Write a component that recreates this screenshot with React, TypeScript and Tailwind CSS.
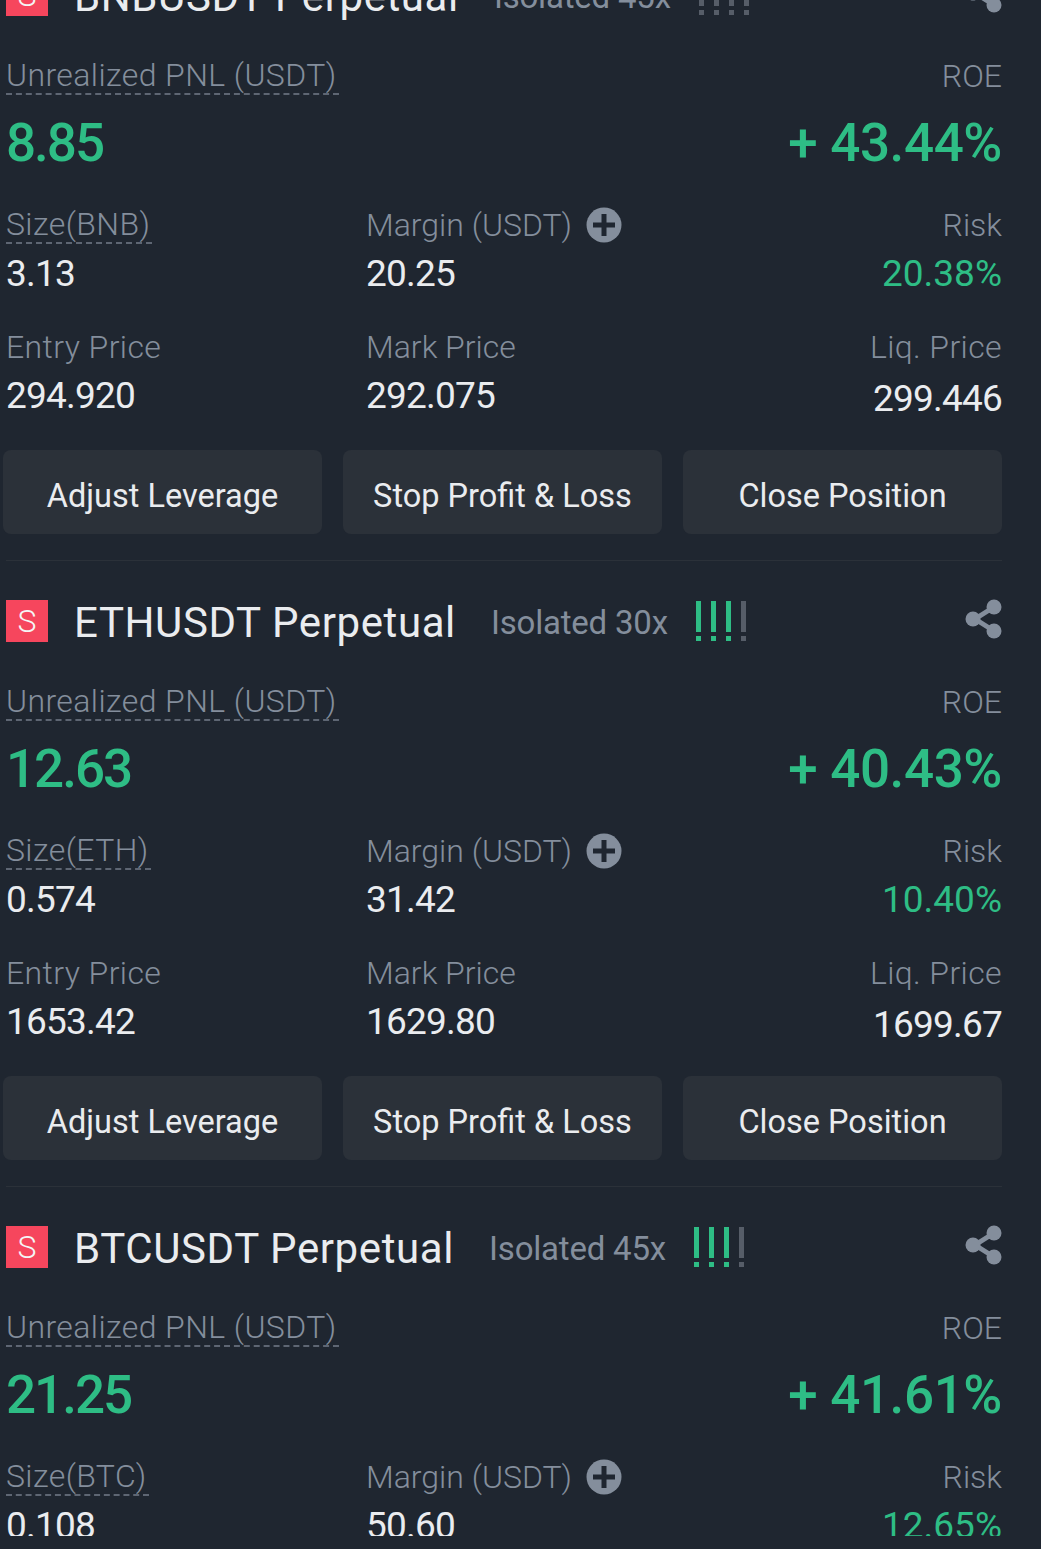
const F = "font-['Roboto','Liberation_Sans',sans-serif]";

function Share() {
  return (
    <svg width="38" height="40" viewBox="0 0 38 40" className="text-[#848e9c] mb-[4px]">
      <path d="M10 20 L29 8 M10 20 L29 32" stroke="currentColor" strokeWidth="5" />
      <circle cx="29" cy="8" r="7.5" fill="currentColor" />
      <circle cx="8" cy="20" r="7.5" fill="currentColor" />
      <circle cx="29" cy="32" r="7.5" fill="currentColor" />
    </svg>
  );
}

function Plus() {
  return (
    <svg width="36" height="36" viewBox="0 0 36 36" className="text-[#848e9c]">
      <circle cx="18" cy="18" r="17.5" fill="currentColor" />
      <path d="M18 7v22M7 18h22" stroke="#1f2630" strokeWidth="5" />
    </svg>
  );
}

function Bars({ active }: { active: number }) {
  return (
    <div className="ml-[28px] flex gap-[10px]">
      {[0, 1, 2, 3].map((i) => (
        <div key={i} className="flex flex-col gap-[4px] w-[5px]">
          <div className={`h-[31px] ${i < active ? "bg-[#2ebd85]" : "bg-[#565d68]"}`} />
          <div className={`h-[5px] ${i < active ? "bg-[#2ebd85]" : "bg-[#565d68]"}`} />
        </div>
      ))}
    </div>
  );
}

function Label({ children, dashed, wide }: { children: React.ReactNode; dashed?: boolean; wide?: boolean }) {
  return (
    <span className={`pt-[1px] text-[32px] leading-[35px] ${wide ? "tracking-[0.4px]" : "tracking-normal"} text-[#848e9c] font-light ${dashed ? "pr-[2px] border-b-2 border-dashed border-[#5e6673]" : ""}`}>
      {children}
    </span>
  );
}

function Cell({ label, value, dashed, plus, right, green, lower, wide }: { label: string; value: string; dashed?: boolean; plus?: boolean; right?: boolean; green?: boolean; lower?: boolean; wide?: boolean }) {
  return (
    <div className={`flex flex-col ${right ? "items-end" : "items-start"}`}>
      <div className="h-[42px] flex items-center gap-[14px]">
        <Label dashed={dashed} wide={wide}>{label}</Label>
        {plus && <Plus />}
      </div>
      <div className={`h-[56px] flex items-center text-[37px] ${green ? "tracking-normal text-[#2ebd85]" : "tracking-[-0.8px] text-[#eaecef]"} ${lower ? "pt-[6px]" : ""}`}>
        {value}
      </div>
    </div>
  );
}

type P = { sym: string; base: string; lev: string; bars: number; pnl: string; roe: string; size: string; margin: string; risk: string; entry: string; mark: string; liq: string };

const data: P[] = [
  { sym: "BNBUSDT", base: "BNB", lev: "Isolated 45x", bars: 0, pnl: "8.85", roe: "+ 43.44%", size: "3.13", margin: "20.25", risk: "20.38%", entry: "294.920", mark: "292.075", liq: "299.446" },
  { sym: "ETHUSDT", base: "ETH", lev: "Isolated 30x", bars: 3, pnl: "12.63", roe: "+ 40.43%", size: "0.574", margin: "31.42", risk: "10.40%", entry: "1653.42", mark: "1629.80", liq: "1699.67" },
  { sym: "BTCUSDT", base: "BTC", lev: "Isolated 45x", bars: 3, pnl: "21.25", roe: "+ 41.61%", size: "0.108", margin: "50.60", risk: "12.65%", entry: "", mark: "", liq: "" },
];

function Card({ p }: { p: P }) {
  return (
    <section className="h-[626px] flex flex-col">
      <header className="h-[120px] flex items-center pl-[6px] pr-[38px]">
        <div className="w-[42px] h-[42px] bg-[#f6465d] text-[#f5f5f5] text-[32px] font-light flex items-center justify-center">S</div>
        <h2 className="ml-[26px] pt-[3px] text-[42px] tracking-[0.6px] font-normal text-[#eaecef] whitespace-nowrap">{p.sym} Perpetual</h2>
        <span className="ml-[35px] pt-[3px] text-[33px] text-[#848e9c] whitespace-nowrap tracking-[-0.2px]">{p.lev}</span>
        <Bars active={p.bars} />
        <div className="ml-auto"><Share /></div>
      </header>
      <div className="pl-[6px] pr-[39px] flex justify-between h-[42px] items-center">
        <Label dashed wide>Unrealized PNL (USDT)</Label>
        <Label>ROE</Label>
      </div>
      <div className="pl-[6px] pr-[39px] flex justify-between h-[90px] pt-[3px] items-center text-[53px] font-medium text-[#2ebd85]">
        <span className="tracking-[-2px]">{p.pnl}</span>
        <span className="tracking-[-0.4px]">{p.roe}</span>
      </div>
      <div className="mt-[17px] pl-[6px] pr-[39px] grid grid-cols-[360px_1fr_auto]">
        <Cell label={`Size(${p.base})`} value={p.size} dashed wide />
        <Cell label="Margin (USDT)" value={p.margin} plus />
        <Cell label="Risk" value={p.risk} right green />
      </div>
      <div className="mt-[24px] pl-[6px] pr-[39px] grid grid-cols-[360px_1fr_auto]">
        <Cell label="Entry Price" value={p.entry} wide />
        <Cell label="Mark Price" value={p.mark} />
        <Cell label="Liq. Price" value={p.liq} right lower wide />
      </div>
      <div className="mt-[26px] ml-[3px] mr-[39px] grid grid-cols-3 gap-[21px]">
        {["Adjust Leverage", "Stop Profit & Loss", "Close Position"].map((b) => (
          <button key={b} className="h-[84px] pt-[8px] rounded-[8px] bg-[#2b3139] text-[#eaecef] text-[32.5px] whitespace-nowrap">{b}</button>
        ))}
      </div>
      <div className="mt-auto ml-[6px] mr-[39px] h-px bg-[#2b3139]" />
    </section>
  );
}

export default function App() {
  return (
    <div className={`${F} h-[1549px] w-[1041px] overflow-hidden bg-[#1f2630]`}>
      <div className="-mt-[65px] h-[1601px] overflow-hidden">
        {data.map((p) => <Card key={p.sym} p={p} />)}
      </div>
    </div>
  );
}
